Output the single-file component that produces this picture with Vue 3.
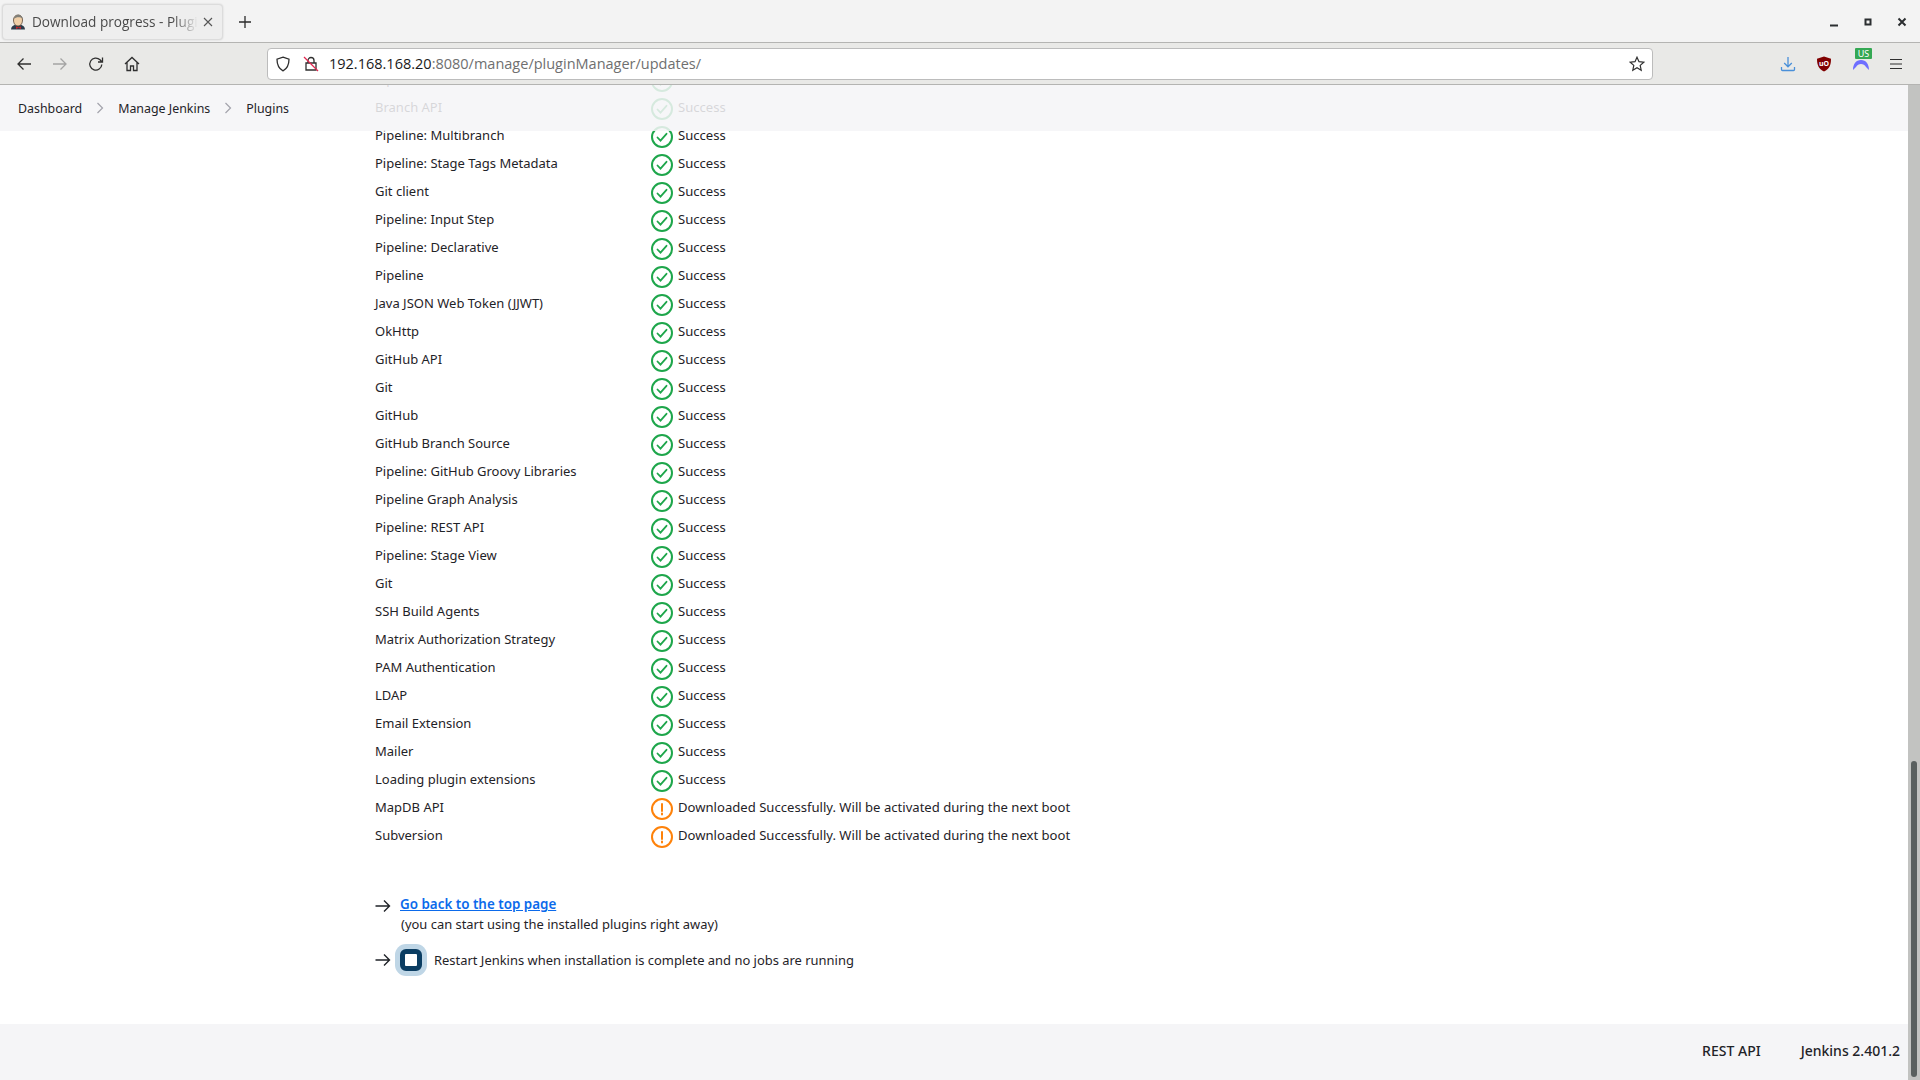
<template>
  <div class="window">
    <header class="chrome">
      <div class="tabbar">
        <div class="tab">
          <svg class="favicon" viewBox="0 0 16 16" width="16" height="16">
            <path d="M1 15.500c.3-2.500 1.500-3.800 3.500-4.500h7c2 .7 3.200 2 3.500 4.500z" fill="#2c3a4a" />
            <path d="M3.500 6c0-3 2-5 4.700-5s4.300 2 4.300 5-1.500 6-4.500 6-4.500-3-4.500-6z" fill="#f0cfa8" stroke="#5b4636" stroke-width=".8" />
            <path d="M3.500 5C4.500 2 7 .5 8.500.8c2 .2 3.700 1.700 4 3.700-2-1.500-6-2-9 .5z" fill="#7f7f79" />
            <path d="M6 12.500l2.500 1 2.500-1v2.500l-2.500-1-2.500 1z" fill="#c8242b" />
          </svg>
          <span class="tab-title">Download progress - Plugin Manager</span>
          <svg class="tab-close" viewBox="0 0 10 10" width="10" height="10">
            <path d="M1 1l8 8M9 1l-8 8" stroke="#555" stroke-width="1.100" fill="none" />
          </svg>
        </div>
        <svg class="newtab" viewBox="0 0 12 12" width="12" height="12">
          <path d="M6 0v12M0 6h12" stroke="#2b2b2b" stroke-width="1.300" fill="none" />
        </svg>
        <div class="winctl">
          <svg viewBox="0 0 10 10" width="10" height="10"><path d="M1 8.500h8" stroke="#2b2e30" stroke-width="2" /></svg>
          <svg viewBox="0 0 10 10" width="10" height="10"><rect x="2.500" y="2.500" width="5" height="5" fill="none" stroke="#2b2e30" stroke-width="2" /></svg>
          <svg viewBox="0 0 10 10" width="10" height="10"><path d="M1.500 1.500l7 7M8.500 1.500l-7 7" stroke="#2b2e30" stroke-width="2" fill="none" /></svg>
        </div>
      </div>
      <div class="toolbar">
        <div class="nav">
          <svg viewBox="0 0 16 16" width="16" height="16"><path d="M15 8H2M7.500 2.500L2 8l5.500 5.500" stroke="#2f2f2f" stroke-width="1.300" fill="none" /></svg>
          <svg viewBox="0 0 16 16" width="16" height="16"><path d="M1 8h13M8.500 2.500L14 8l-5.500 5.500" stroke="#a4a4a4" stroke-width="1.300" fill="none" /></svg>
          <svg viewBox="0 0 16 16" width="16" height="16"><path d="M13.800 8.500A6 6 0 1 1 12 3.800L14 6M14.500 1.500V6H10" stroke="#2f2f2f" stroke-width="1.300" fill="none" /></svg>
          <svg viewBox="0 0 16 16" width="16" height="16"><path d="M1 8l7-6.500L15 8M3 6.500V14.500H6.500V10h3v4.500H13V6.500" stroke="#2f2f2f" stroke-width="1.300" fill="none" /></svg>
        </div>
        <div class="urlbar">
          <svg class="shield" viewBox="0 0 16 16" width="16" height="16"><path d="M8 1.200l6 2c0 5-1 9-6 11.600C3 12.200 2 8.200 2 3.200z" stroke="#2f2f2f" stroke-width="1.300" fill="none" /></svg>
          <svg class="lock" viewBox="0 0 16 16" width="16" height="16">
            <path d="M5 7V4.500a3 3 0 0 1 6 0V7M3 7h10v7H3z" stroke="#2f2f2f" stroke-width="1.300" fill="none" />
            <path d="M1 1l14 14" stroke="#e22850" stroke-width="1.300" />
          </svg>
          <span class="url">192.168.168.20<span class="url-dim">:8080/manage/pluginManager/updates/</span></span>
          <svg class="star" viewBox="0 0 16 16" width="16" height="16"><path d="M8 1.200l2 4.500 4.800.5-3.600 3.200 1 4.800L8 11.800l-4.200 2.400 1-4.800L1.200 6.200 6 5.700z" stroke="#2f2f2f" stroke-width="1.200" fill="none" /></svg>
        </div>
        <div class="ext">
          <svg viewBox="0 0 16 16" width="16" height="16"><path d="M8 1v9.500M4.200 7L8 10.800 11.800 7M1.500 11v2.500a1 1 0 0 0 1 1h11a1 1 0 0 0 1-1V11" stroke="#4a90d9" stroke-width="1.300" fill="none" /></svg>
          <div class="ublock">
            <svg viewBox="0 0 16 16" width="16" height="16"><path d="M8 0.500l7 2.200c0 6-1.500 10.300-7 12.800C2.500 13 1 8.700 1 2.700z" fill="#800000" /></svg>
            <span>uO</span>
          </div>
          <div class="vpn">
            <svg viewBox="0 0 18 14" width="18" height="14"><path d="M1 13C1 7 4 3 9 3s8 4 8 10l-3-3c-1-2-3-3-5-3s-4 1-5 3z" fill="#6e6eff" /></svg>
            <span>US</span>
          </div>
          <svg class="menu" viewBox="0 0 14 12" width="14" height="12"><path d="M1 1.500h12M1 6h12M1 10.500h12" stroke="#2f2f2f" stroke-width="1.200" fill="none" /></svg>
        </div>
      </div>
    </header>

    <div class="page">
      <main class="content">
        <ul class="rows">
          <li v-for="row in rows" :key="row.id" class="row">
            <span class="name">{{ row.name }}</span>
            <svg v-if="row.warn" class="status" viewBox="0 0 24 24" width="24" height="24">
              <circle cx="12" cy="12" r="10" fill="none" stroke="#fe820a" stroke-width="2" />
              <path d="M12 7v7M12 16.500v1" stroke="#fe820a" stroke-width="2" stroke-linecap="round" fill="none" />
            </svg>
            <svg v-else class="status" viewBox="0 0 24 24" width="24" height="24">
              <circle cx="12" cy="12" r="10" fill="none" stroke="#1ea64b" stroke-width="2" />
              <path d="M7.500 12.500l3 3.200L16.500 8.800" stroke="#1ea64b" stroke-width="1.800" stroke-linecap="round" fill="none" />
            </svg>
            <span class="result">{{ row.warn ? warnText : "Success" }}</span>
          </li>
        </ul>

        <div class="actions">
          <div class="action top-link">
            <svg class="arrow" viewBox="0 0 16 16" width="16" height="16"><path d="M0.500 8h14M9 2.500L14.500 8 9 13.500" stroke="#1f2328" stroke-width="1.400" fill="none" /></svg>
            <div>
              <a class="link" href="#">Go back to the top page</a>
              <p class="hint">(you can start using the installed plugins right away)</p>
            </div>
          </div>
          <div class="action restart">
            <svg class="arrow" viewBox="0 0 16 16" width="16" height="16"><path d="M0.500 8h14M9 2.500L14.500 8 9 13.500" stroke="#1f2328" stroke-width="1.400" fill="none" /></svg>
            <span class="checkbox"></span>
            <span>Restart Jenkins when installation is complete and no jobs are running</span>
          </div>
        </div>
      </main>

      <footer class="footer">
        <span>REST API</span>
        <span>Jenkins 2.401.2</span>
      </footer>

      <nav class="crumbs">
        <span>Dashboard</span>
        <svg viewBox="0 0 8 12" width="8" height="12"><path d="M1.500 1l5 5-5 5" stroke="#a3a3ac" stroke-width="1.200" fill="none" /></svg>
        <span>Manage Jenkins</span>
        <svg viewBox="0 0 8 12" width="8" height="12"><path d="M1.500 1l5 5-5 5" stroke="#a3a3ac" stroke-width="1.200" fill="none" /></svg>
        <span>Plugins</span>
      </nav>

      <div class="scrollbar"><div class="thumb"></div></div>
    </div>
  </div>
</template>

<script setup>
const warnText = "Downloaded Successfully. Will be activated during the next boot";

const names = [
  "Pipeline: Model API",
  "Branch API",
  "Pipeline: Multibranch",
  "Pipeline: Stage Tags Metadata",
  "Git client",
  "Pipeline: Input Step",
  "Pipeline: Declarative",
  "Pipeline",
  "Java JSON Web Token (JJWT)",
  "OkHttp",
  "GitHub API",
  "Git",
  "GitHub",
  "GitHub Branch Source",
  "Pipeline: GitHub Groovy Libraries",
  "Pipeline Graph Analysis",
  "Pipeline: REST API",
  "Pipeline: Stage View",
  "Git",
  "SSH Build Agents",
  "Matrix Authorization Strategy",
  "PAM Authentication",
  "LDAP",
  "Email Extension",
  "Mailer",
  "Loading plugin extensions",
  "MapDB API",
  "Subversion",
];

const rows = names.map((name, id) => ({ id, name, warn: id >= 26 }));
</script>

<style>
html,
body {
  margin: 0;
  overflow: hidden;
}
</style>

<style scoped>
.window {
  width: 1920px;
  height: 1080px;
  display: flex;
  flex-direction: column;
  overflow: hidden;
  background: #fff;
  color: #1f2328;
  font-family: "Noto Sans", sans-serif;
  font-size: 13px;
}
.chrome {
  flex: none;
  position: relative;
  z-index: 2;
}
.tabbar {
  height: 43px;
  box-sizing: border-box;
  display: flex;
  align-items: center;
  padding: 4px 0 3px 2px;
  background: #f3f3f3;
  border-bottom: 1px solid #b4b4b2;
}
.tab {
  width: 221px;
  height: 36px;
  box-sizing: border-box;
  display: flex;
  align-items: center;
  padding: 0 9px 0 7px;
  background: #eeeeee;
  border: 1px solid #dcdcdc;
  border-radius: 4px;
  box-shadow: 0 0 2px rgba(0, 0, 0, 0.15);
}
.favicon {
  flex: none;
  margin-right: 6px;
}
.tab-title {
  flex: 1;
  overflow: hidden;
  white-space: nowrap;
  font-family: "Open Sans", sans-serif;
  font-size: 13.600px;
  color: #4a4a4a;
  -webkit-mask-image: linear-gradient(to right, #000 85%, transparent);
  mask-image: linear-gradient(to right, #000 85%, transparent);
}
.tab-close {
  flex: none;
  margin-left: 5px;
}
.newtab {
  margin-left: 16px;
}
.winctl {
  margin-left: auto;
  display: flex;
  gap: 24px;
  padding-right: 13px;
}
.toolbar {
  height: 42px;
  box-sizing: border-box;
  display: flex;
  align-items: center;
  background: #e9e9e7;
  border-bottom: 1px solid #b4b4b2;
}
.nav {
  display: flex;
  gap: 20px;
  padding-left: 16px;
  width: 267px;
  box-sizing: border-box;
  flex: none;
}
.urlbar {
  width: 1386px;
  height: 32px;
  box-sizing: border-box;
  flex: none;
  display: flex;
  align-items: center;
  padding: 0 7px 0 7px;
  background: #fff;
  border: 1px solid #bcbcbc;
  border-radius: 4px;
}
.lock {
  margin-left: 12px;
}
.url {
  margin-left: 10px;
  flex: 1;
  font-family: "Open Sans", sans-serif;
  font-size: 14.500px;
  color: #1a1a1a;
}
.url-dim {
  color: #6f6f6f;
}
.ext {
  flex: 1;
  display: flex;
  align-items: center;
  gap: 20px;
  padding-left: 127px;
}
.ublock,
.vpn {
  position: relative;
  display: flex;
}
.ublock span {
  position: absolute;
  left: 3px;
  top: 3px;
  font-size: 7px;
  font-weight: 700;
  color: #fff;
}
.vpn {
  margin-right: -1px;
}
.vpn svg {
  margin-top: 1px;
}
.vpn span {
  position: absolute;
  left: 3px;
  top: -8px;
  width: 17px;
  height: 11px;
  line-height: 11px;
  text-align: center;
  font-size: 9px;
  color: #fff;
  background: #34a853;
  border-radius: 1px;
}
.page {
  flex: 1;
  position: relative;
  min-height: 0;
  display: flex;
  flex-direction: column;
  padding-right: 12px;
  overflow: hidden;
}
.content {
  flex: 1;
  padding-left: 375px;
}
.rows {
  list-style: none;
  margin: -20px 0 0;
  padding: 0;
}
.row {
  height: 28px;
  display: flex;
  align-items: center;
}
.name {
  width: 275px;
  flex: none;
  margin-top: -1px;
}
.result {
  margin: -1px 0 0 1px;
  font-size: 13.100px;
}
.status {
  flex: none;
  margin: 3px 3px 0 0;
  width: 24px;
  height: 24px;
}
.actions {
  padding-top: 46px;
  display: flex;
  flex-direction: column;
  gap: 11px;
  font-size: 12.950px;
}
.action {
  display: flex;
}
.arrow {
  flex: none;
  margin-right: 9px;
}
.top-link .arrow {
  margin-top: 3px;
}
.link {
  color: #0b6aeb;
  font-weight: 600;
  font-size: 13.400px;
  text-decoration: underline;
}
.hint {
  margin: 2px 0 0 1px;
}
.restart {
  align-items: center;
  height: 32px;
}
.restart .arrow {
  margin-right: 4px;
}
.checkbox {
  flex: none;
  width: 12px;
  height: 12px;
  margin-right: 12px;
  background: #fff;
  border: 5px solid #0b3d62;
  border-radius: 6px;
  box-shadow: 0 0 0 5px #bfd6e6;
  margin-left: 5px;
}
.footer {
  flex: none;
  height: 56px;
  display: flex;
  align-items: center;
  justify-content: flex-end;
  gap: 40px;
  padding: 0 8px 4px 0;
  box-sizing: border-box;
  background: #f5f5f7;
  font-size: 14px;
  font-weight: 500;
}
.crumbs {
  position: absolute;
  left: 0;
  right: 12px;
  top: 0;
  height: 46px;
  display: flex;
  align-items: center;
  padding-left: 18px;
  gap: 14px;
  font-size: 12.400px;
  background: rgba(245, 245, 247, 0.86);
}
.scrollbar {
  position: absolute;
  top: 0;
  right: 0;
  bottom: 0;
  width: 12px;
  background: #c2c3c1;
}
.thumb {
  position: absolute;
  left: 3px;
  top: 676px;
  width: 6px;
  height: 316px;
  border-radius: 3px;
  background: #5a605f;
}
</style>
